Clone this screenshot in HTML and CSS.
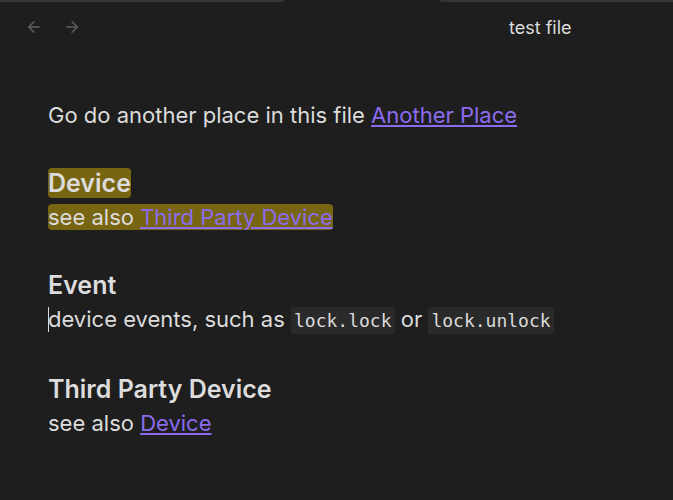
FILE: index.html
```html
<!DOCTYPE html>
<html lang="en">
<head>
    <meta charset="UTF-8">
    <meta name="viewport" content="width=device-width, initial-scale=1.0">
    <title>test file</title>
    <link rel="stylesheet" href="styles.css">
</head>
<body>
    <div class="tab-edge">
        <div class="edge-left"></div>
        <div class="edge-right"></div>
    </div>

    <div class="view-header">
        <div class="nav">
            <svg class="nav-btn" width="18" height="18" viewBox="0 0 24 24" fill="none" stroke="currentColor" stroke-width="1.8" stroke-linecap="round" stroke-linejoin="round">
                <path d="M19 12H5"/><path d="M12 19l-7-7 7-7"/>
            </svg>
            <svg class="nav-btn" width="18" height="18" viewBox="0 0 24 24" fill="none" stroke="currentColor" stroke-width="1.8" stroke-linecap="round" stroke-linejoin="round">
                <path d="M5 12h14"/><path d="M12 5l7 7-7 7"/>
            </svg>
        </div>
        <div class="view-title">test file</div>
    </div>

    <div class="content">
        <p class="line first">Go do another place in this file <a href="#">Another Place</a></p>

        <h2 class="heading"><span class="mark">Device</span></h2>
        <p class="line"><span class="mark">see also <a href="#">Third Party Device</a></span></p>

        <h2 class="heading">Event</h2>
        <p class="line"><span class="cursor"></span>device events, such as <code>lock.lock</code> or <code>lock.unlock</code></p>

        <h2 class="heading">Third Party Device</h2>
        <p class="line">see also <a href="#">Device</a></p>
    </div>
</body>
</html>
```

FILE: styles.css
```css
body {
    margin: 0;
    background-color: #1e1e1e;
    color: #dcdcdc;
    font-family: Inter, "Noto Sans", sans-serif;
    height: 500px;
    overflow: hidden;
}
.tab-edge {
    display: flex;
    justify-content: space-between;
    height: 2px;
}
.edge-left {
    width: 284px;
    background-color: #363636;
    border-bottom-right-radius: 2px;
}
.edge-right {
    width: 233px;
    background-color: #363636;
    border-bottom-left-radius: 2px;
}
.view-header {
    display: flex;
    align-items: center;
    height: 50px;
    padding: 0 0 0 25px;
}
.nav {
    display: flex;
    gap: 20px;
    color: #606060;
}
.view-title {
    margin-left: 428px;
    font-size: 18px;
    color: #dcdcdc;
}
.content {
    padding: 0 0 0 48px;
}
.line {
    margin: 0;
    font-size: 22px;
    line-height: 34px;
}
.first {
    margin-top: 46px;
}
.heading {
    margin: 34px 0 0 0;
    font-size: 25px;
    font-weight: 600;
    line-height: 34px;
}
.mark {
    background-color: #786512;
    border-radius: 4px;
}
a {
    color: #8b6cef;
    text-decoration: underline;
    text-underline-offset: 2px;
}
code {
    font-family: "DejaVu Sans Mono", monospace;
    font-size: 18px;
    background-color: #2a2a2a;
    padding: 3px 3px;
    border-radius: 3px;
}
.cursor {
    display: inline-block;
    width: 1px;
    height: 25px;
    background-color: #dcdcdc;
    vertical-align: -5px;
    margin-right: -1px;
}
```
